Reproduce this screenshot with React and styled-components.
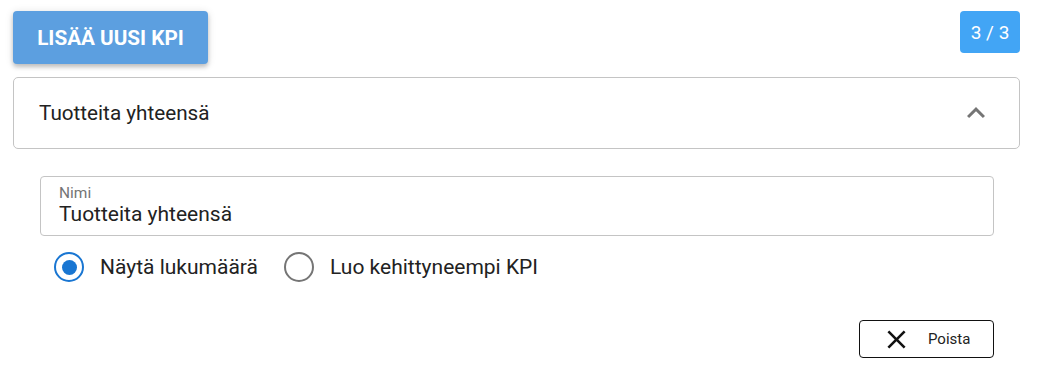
import React, { useState } from 'react';
import styled, { createGlobalStyle } from 'styled-components';

//----------------------------------------------> KPI EDITOR
const GlobalStyle = createGlobalStyle`
    body {
        margin: 0;
        background: #fff;
        font-family: Roboto, "Liberation Sans", sans-serif;
    }
`;

export default function App() {
    const [mode, setMode] = useState('count');
    const [name, setName] = useState('Tuotteita yhteensä');
    return (
        <Page>
            <GlobalStyle />
            <TopBar>
                <AddButton>LISÄÄ UUSI KPI</AddButton>
                <Counter>3 / 3</Counter>
            </TopBar>
            <Panel>
                <PanelTitle>Tuotteita yhteensä</PanelTitle>
                <svg width="36" height="36" viewBox="0 0 24 24">
                    <path d="M12 8l-6 6 1.41 1.41L12 10.83l4.59 4.58L18 14z" fill="#757575" />
                </svg>
            </Panel>
            <Body>
                <Field>
                    <FieldLabel>Nimi</FieldLabel>
                    <FieldInput value={name} onChange={(e) => setName(e.target.value)} />
                </Field>
                <RadioRow>
                    <RadioOption onClick={() => setMode('count')}>
                        <RadioCircle $checked={mode === 'count'} />
                        Näytä lukumäärä
                    </RadioOption>
                    <RadioOption onClick={() => setMode('advanced')}>
                        <RadioCircle $checked={mode === 'advanced'} />
                        Luo kehittyneempi KPI
                    </RadioOption>
                </RadioRow>
                <Footer>
                    <DeleteButton>
                        <svg width="31" height="31" viewBox="0 0 24 24">
                            <path d="M19 6.41L17.59 5 12 10.59 6.41 5 5 6.41 10.59 12 5 17.59 6.41 19 12 13.41 17.59 19 19 17.59 13.41 12z" fill="#111" />
                        </svg>
                        Poista
                    </DeleteButton>
                </Footer>
            </Body>
        </Page>
    );
}

const Page = styled.div`
    width: 1007px;
    padding: 11px 18px 0 13px;
`;

const TopBar = styled.div`
    display: flex;
    justify-content: space-between;
    align-items: flex-start;
    margin-bottom: 13px;
`;

const AddButton = styled.button`
    width: 195px;
    height: 53px;
    border: none;
    border-radius: 4px;
    background: #5c9fe0;
    color: #fff;
    font-family: Roboto, "Liberation Sans", sans-serif;
    font-size: 20.7px;
    font-weight: 700;
    padding: 0;
    box-shadow: 0 3px 4px rgba(0,0,0,.2), 0 1px 8px rgba(0,0,0,.12);
    cursor: pointer;
`;

const Counter = styled.div`
    width: 60px;
    height: 42px;
    border-radius: 4px;
    background: #42a5f5;
    color: #fff;
    font-size: 19px;
    display: flex;
    align-items: center;
    justify-content: center;
`;

const Panel = styled.div`
    height: 70px;
    border: 1px solid #c4c4c4;
    border-radius: 5px;
    display: flex;
    align-items: center;
    justify-content: space-between;
    padding: 0 25px 0 25px;
`;

const PanelTitle = styled.div`
    font-size: 20.7px;
    color: #222;
`;

const Body = styled.div`
    padding: 27px 26px 0 27px;
`;

const Field = styled.label`
    display: flex;
    flex-direction: column;
    height: 60px;
    border: 1px solid #c4c4c4;
    border-radius: 4px;
    padding: 0 18px;
    box-sizing: border-box;
    justify-content: center;
`;

const FieldLabel = styled.span`
    font-size: 15.5px;
    color: #757575;
    line-height: 17px;
    margin-top: -1px;
`;

const FieldInput = styled.input`
    border: none;
    outline: none;
    padding: 0;
    font-family: Roboto, "Liberation Sans", sans-serif;
    font-size: 21px;
    color: #222;
    line-height: 24px;
    background: transparent;
`;

const RadioRow = styled.div`
    display: flex;
    gap: 26px;
    margin-top: 16px;
    padding-left: 14px;
`;

const RadioOption = styled.div`
    display: flex;
    align-items: center;
    gap: 16px;
    font-size: 21px;
    color: #222;
    cursor: pointer;
`;

const RadioCircle = styled.span`
    width: 30px;
    height: 30px;
    box-sizing: border-box;
    border-radius: 50%;
    border: 2.5px solid ${p => p.$checked ? '#1976d2' : '#757575'};
    display: flex;
    align-items: center;
    justify-content: center;
    &::after {
        content: '';
        width: 15px;
        height: 15px;
        border-radius: 50%;
        background: #1976d2;
        display: ${p => p.$checked ? 'block' : 'none'};
    }
`;

const Footer = styled.div`
    display: flex;
    justify-content: flex-end;
    margin-top: 38px;
`;

const DeleteButton = styled.button`
    width: 135px;
    height: 38px;
    border: 1px solid #111;
    border-radius: 4px;
    background: #fff;
    display: flex;
    align-items: center;
    gap: 16px;
    padding: 0 0 0 21px;
    font-family: Roboto, "Liberation Sans", sans-serif;
    font-size: 15px;
    color: #222;
    cursor: pointer;
`;
